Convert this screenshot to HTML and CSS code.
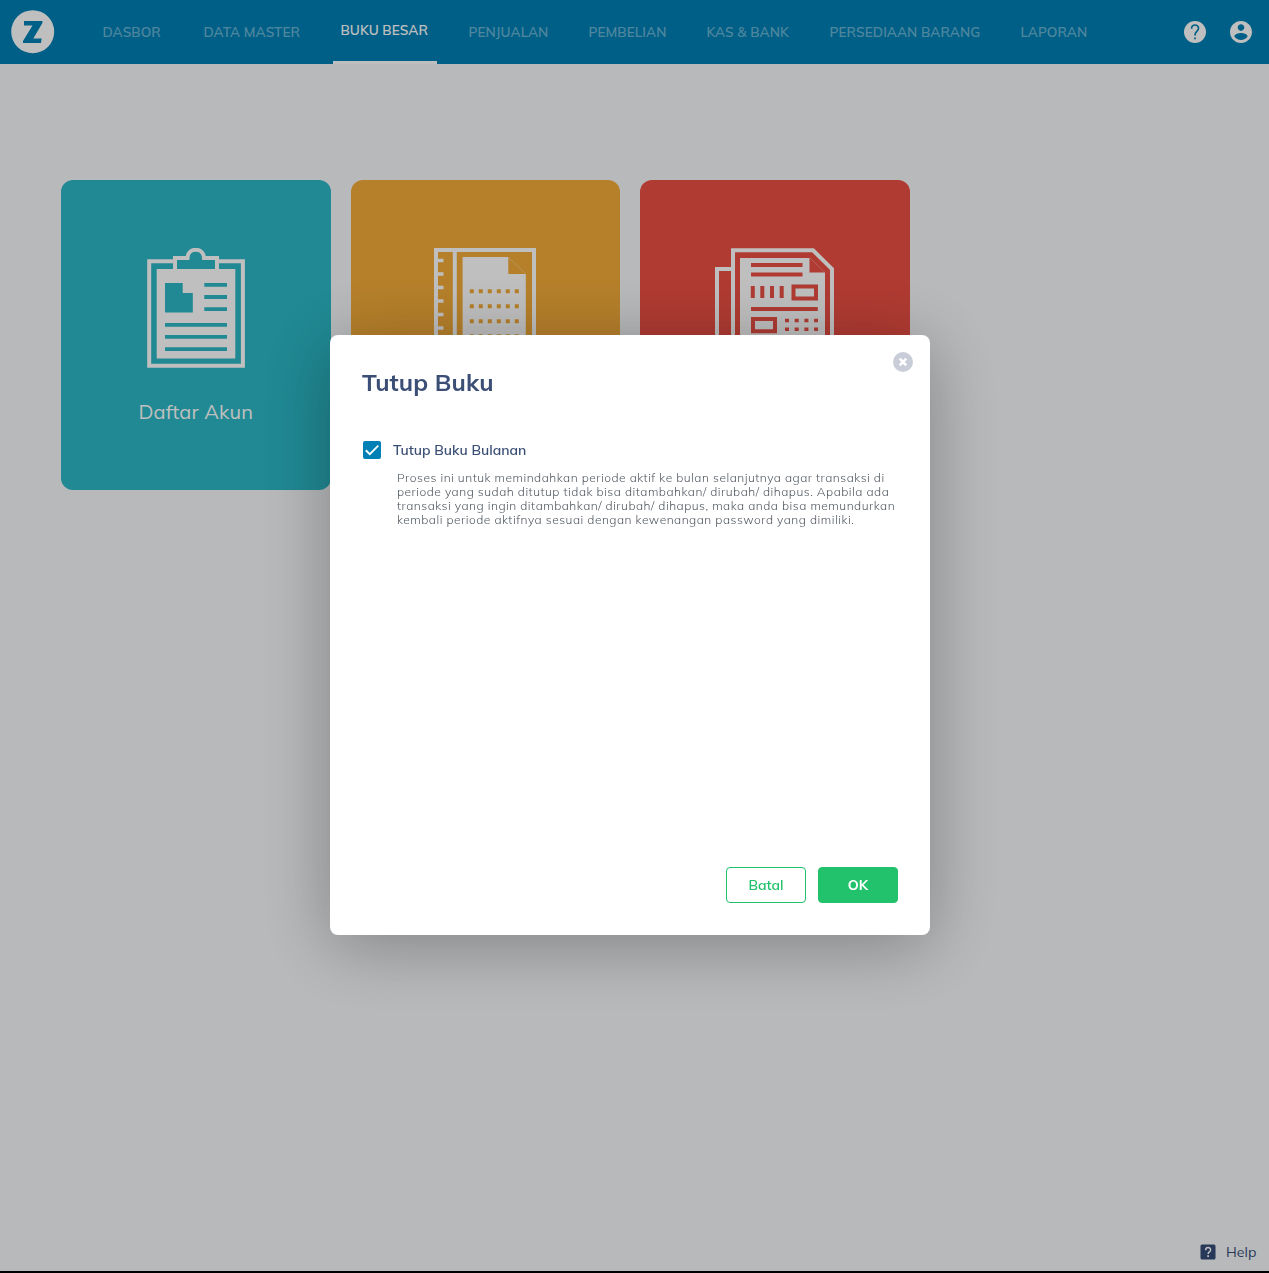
FILE: index.html
```html
<!DOCTYPE html>
<html lang="id">
<head>
<meta charset="utf-8">
<title>Buku Besar</title>
<link rel="stylesheet" href="styles.css">
</head>
<body>
<div class="page">
  <header class="topbar">
    <svg class="logo" viewBox="0 0 44 44"><circle cx="21.700" cy="21.700" r="21.500" fill="#fff"/><path d="M13 11H31.400V13L22.300 28.500H30.600L30 33H12V31L21.500 15.500H13Z" fill="#0080b5"/></svg>
    <nav class="nav">
      <a class="nav-item">DASBOR</a>
      <a class="nav-item">DATA MASTER</a>
      <a class="nav-item active">BUKU BESAR</a>
      <a class="nav-item">PENJUALAN</a>
      <a class="nav-item">PEMBELIAN</a>
      <a class="nav-item">KAS &amp; BANK</a>
      <a class="nav-item">PERSEDIAAN BARANG</a>
      <a class="nav-item">LAPORAN</a>
    </nav>
    <div class="actions">
      <svg viewBox="2 2 20 20"><circle cx="12" cy="12" r="10" fill="#fff"/><path d="M8.900 9C8.900 4.400 15.200 4.800 15.200 8.600C15.200 11.200 12 11.400 12 15.100" fill="none" stroke="#0080b5" stroke-width="1.500"/><path d="M11.200 17H12.800V18.600H11.200Z" fill="#0080b5"/></svg>
      <svg viewBox="2 2 20 20"><path fill="#fff" d="M12 2C6.480 2 2 6.480 2 12s4.480 10 10 10 10-4.480 10-10S17.520 2 12 2zm0 3c1.660 0 3 1.340 3 3s-1.340 3-3 3-3-1.340-3-3 1.340-3 3-3zm0 14.200c-2.500 0-4.710-1.280-6-3.220.030-1.990 4-3.080 6-3.080 1.990 0 5.970 1.090 6 3.080-1.290 1.940-3.500 3.220-6 3.220z"/></svg>
    </div>
  </header>

  <main class="cards">
    <a class="card teal">
      <svg width="98" height="120" viewBox="147 248 98 120" fill="none" stroke="#fff" stroke-width="4">
        <path d="M175 261.200H149.200V365.700H242.900V261.200H217M175 270V258H187.500C188 247 203.500 247 204 258H217V270"/>
        <path d="M156.700 269H235.300V358.500H156.700Z" fill="#fff" stroke="none"/>
        <path d="M165 283H182.700V293H192.800V312.500H165ZM204.300 283H227V286.700H204.300ZM204.300 295H227V298.900H204.300ZM204.300 307.200H227V311H204.300ZM165 323H227V326.800H165ZM165 335H227V338.800H165ZM165 347.200H227V351H165Z" fill="#2bb7c5" stroke="none"/>
      </svg>
      <span class="card-label">Daftar Akun</span>
    </a>
    <a class="card orange">
      <svg width="102" height="120" viewBox="434 248 102 120" fill="none" stroke="#fff" stroke-width="4">
        <path d="M436 250H534V366H436ZM454.800 250V366"/>
        <path d="M436 260.600H443.500M436 274H443.500M436 287.500H443.500M436 301H443.500M436 314.400H443.500M436 328H443.500" stroke-width="3.500"/>
        <path d="M462.600 257H508.300V274H525.800V358H462.600Z" fill="#fff" stroke="none"/>
        <path d="M508.500 257.500L525.500 273.500" stroke-width=".3"/>
        <path d="M469.800 291.200H520M469.800 306.200H520M469.800 321.200H520M469.800 336.200H520" stroke="#f2ab39" stroke-dasharray="4 5"/>
      </svg>
    </a>
    <a class="card red">
      <svg width="120" height="120" viewBox="715 248 120 120" fill="none" stroke="#fff" stroke-width="4">
        <path d="M733 366V250.300H813L832 269V366ZM733 269H717V366H733"/>
        <path d="M740 258H809.500V272.500H825V360H740Z" fill="#fff" stroke="none"/>
        <path d="M810 258L824.500 272" stroke-width=".3"/>
        <g stroke="#eb4f44"><path d="M751 265H802.500M751 274.400H802.500M752.800 286V298M762.300 286V298M772 286V298M781.700 286V298M751 309H817.800"/><path d="M793.500 286.500H816V298.500H793.500ZM753 319H775V331.200H753Z"/><path d="M785 320.500H818M785 329.300H818" stroke-dasharray="4 5.700" stroke-width="3.600"/></g>
      </svg>
    </a>
  </main>

  <a class="help">
    <svg width="16" height="16" viewBox="0 0 16 16"><rect x=".5" y=".5" width="15" height="15" rx="1.500" fill="#344b76"/><path d="M5.600 6.300C5.600 2.600 10.600 2.800 10.600 5.900C10.600 7.800 8.100 7.900 8.100 10" fill="none" stroke="#fff" stroke-width="1.500"/><path d="M7.200 11.200H9V12.900H7.200Z" fill="#fff"/></svg>
    <span>Help</span>
  </a>
  <div class="bottom-line"></div>
</div>

<div class="overlay">
  <section class="dialog">
    <svg class="close" viewBox="0 0 20 20"><circle cx="10" cy="10" r="10" fill="#c9cdd8"/><path d="M6.700 6.700L13.300 13.300M13.300 6.700L6.700 13.300" stroke="#fff" stroke-width="2.500"/></svg>
    <h1 class="title">Tutup Buku</h1>
    <label class="option">
      <svg width="18" height="18" viewBox="0 0 18 18"><rect width="18" height="18" rx="2" fill="#0080b5"/><path d="M2.800 9.300L6.800 13.200L15.300 4.700" fill="none" stroke="#fff" stroke-width="1.900"/></svg>
      <span>Tutup Buku Bulanan</span>
    </label>
    <p class="description">Proses ini untuk memindahkan periode aktif ke bulan selanjutnya agar transaksi di<br>periode yang sudah ditutup tidak bisa ditambahkan/ dirubah/ dihapus. Apabila ada<br>transaksi yang ingin ditambahkan/ dirubah/ dihapus, maka anda bisa memundurkan<br>kembali periode aktifnya sesuai dengan kewenangan password yang dimiliki.</p>
    <div class="buttons">
      <button class="btn outline">Batal</button>
      <button class="btn solid">OK</button>
    </div>
  </section>
</div>
</body>
</html>
```
FILE: styles.css
```css
* { box-sizing: border-box; }
body { margin: 0; font-family: Mulish, Muli, Lato, "Open Sans", sans-serif; overflow: hidden; }
svg { display: block; flex: none; }
.page { height: 1273px; background: #f5f7f9; display: flex; flex-direction: column; }

.topbar { height: 64px; background: #007fb4; display: flex; align-items: center; padding: 0 17px 0 11px; }
.logo { width: 44px; height: 44px; }
.nav { margin-left: 40px; height: 64px; display: grid; grid-template-columns: 77px 113px 104px 96px 94px 99px 167px 82px; column-gap: 24px; }
.nav-item { padding-left: 7.5px; font-size: 13.6px; font-weight: 600; line-height: 64px; letter-spacing: .05px; white-space: nowrap; color: rgba(255, 255, 255, .42); }
.nav-item.active { color: #fff; line-height: 60px; border-bottom: 3px solid #fff; }
.actions { margin-left: auto; display: flex; gap: 24px; }
.actions svg { width: 22px; height: 22px; }

.cards { width: 849px; margin: 116px 0 0 61px; display: grid; grid-template-columns: repeat(3, 1fr); gap: 20px; }
.card { height: 310px; border-radius: 12px; padding-top: 68px; display: flex; flex-direction: column; align-items: center; }
.teal { background: #2bb7c5; }
.orange { background: #f3ab39; }
.red { background: #eb4f44; }
.card-label { margin-top: 32px; font-size: 20px; line-height: 24px; letter-spacing: .15px; color: #fff; }

.help { margin: auto 12.5px 10px auto; display: flex; align-items: center; gap: 10px; font-size: 14px; line-height: 18px; letter-spacing: .1px; color: #344b76; }
.bottom-line { height: 2px; background: #000; }

.overlay { position: fixed; inset: 0; background: rgba(0, 0, 0, .25); padding: 335px 0 0 330px; }
.dialog { position: relative; width: 600px; height: 600px; padding: 32px; background: #fff; border-radius: 8px; box-shadow: 0 10px 70px rgba(0, 0, 0, .3); display: flex; flex-direction: column; }
.close { position: absolute; top: 17px; right: 17px; width: 20px; height: 20px; }
.title { margin: 0; font-size: 24px; line-height: 30px; font-weight: 700; letter-spacing: .1px; color: #3b4f76; }
.option { margin: 44px 0 0 1px; display: flex; align-items: center; gap: 12px; font-size: 14px; line-height: 18px; font-weight: 600; color: #3b4f76; }
.description { margin: 12px 0 0 35px; font-size: 12px; line-height: 14px; font-weight: 300; letter-spacing: .5px; white-space: nowrap; color: #505860; }
.buttons { margin-top: auto; display: flex; justify-content: flex-end; gap: 12px; }
.btn { width: 80px; height: 36px; padding: 0; border: 1px solid #22c16b; border-radius: 4px; font: 600 14px/18px Mulish, Muli, Lato, sans-serif; }
.outline { background: #fff; color: #22c16b; }
.solid { background: #22c16b; color: #fff; font-weight: 700; }
```
